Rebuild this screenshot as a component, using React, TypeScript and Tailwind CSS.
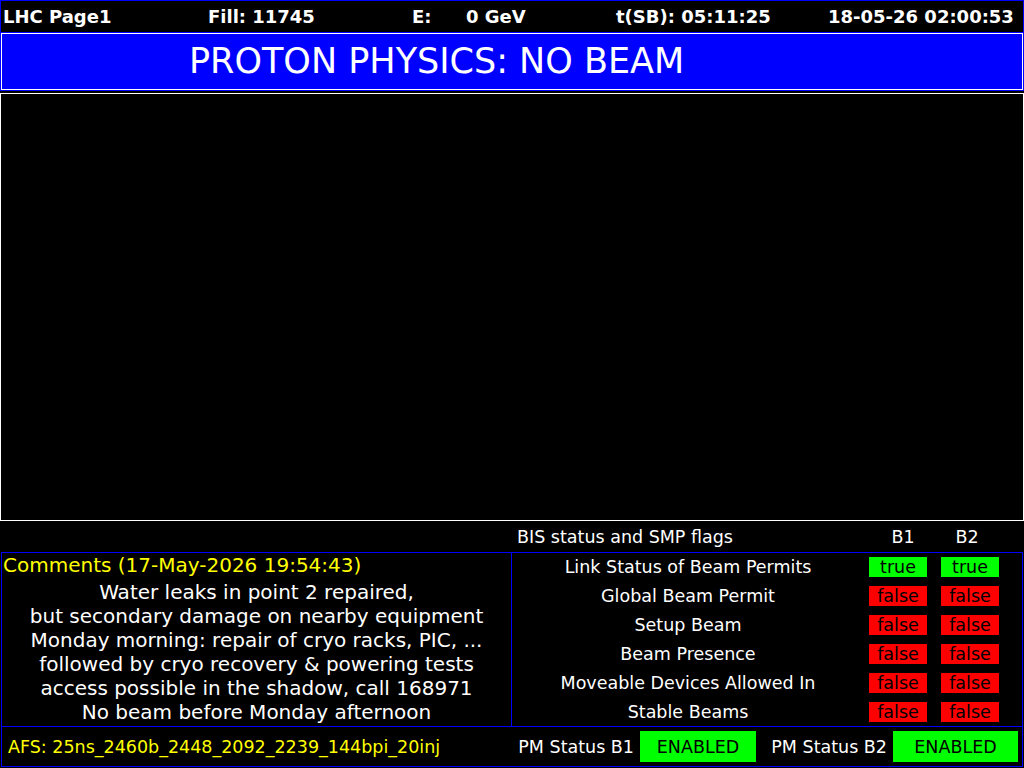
const FONT = { fontFamily: '"DejaVu Sans", "Liberation Sans", sans-serif' }

const flags = [
  { label: 'Link Status of Beam Permits', b1: true, b2: true },
  { label: 'Global Beam Permit', b1: false, b2: false },
  { label: 'Setup Beam', b1: false, b2: false },
  { label: 'Beam Presence', b1: false, b2: false },
  { label: 'Moveable Devices Allowed In', b1: false, b2: false },
  { label: 'Stable Beams', b1: false, b2: false },
]

const comments = [
  'Water leaks in point 2 repaired,',
  'but secondary damage on nearby equipment',
  'Monday morning: repair of cryo racks, PIC, ...',
  'followed by cryo recovery & powering tests',
  'access possible in the shadow, call 168971',
  'No beam before Monday afternoon',
]

function Flag({ on }: { on: boolean }) {
  return (
    <span
      className={
        'w-[58px] h-[20px] flex items-center justify-center text-black text-[17.5px] leading-[20px] ' +
        (on ? 'bg-[#00ff00]' : 'bg-[#ff0000]')
      }
    >
      {on ? 'true' : 'false'}
    </span>
  )
}

export default function App() {
  return (
    <div className="w-[1024px] h-[768px] bg-black text-white flex flex-col overflow-hidden" style={FONT}>
      {/* top status line */}
      <div className="h-[32px] shrink-0 border-t border-x border-[#0000ff] flex items-start pl-[2px] text-[18px] leading-[32px] font-bold whitespace-nowrap">
        <span className="w-[205px]">LHC Page1</span>
        <span className="w-[204px]">Fill: 11745</span>
        <span className="w-[54px]">E:</span>
        <span className="w-[150px]">0 GeV</span>
        <span className="w-[212px]">t(SB): 05:11:25</span>
        <span>18-05-26 02:00:53</span>
      </div>

      {/* machine mode banner */}
      <div className="h-[59px] shrink-0 bg-[#0000ff] p-[1px]">
        <div className="h-full border border-white flex items-center pl-[187px] text-[35px] leading-[55px] whitespace-nowrap">
          PROTON PHYSICS: NO BEAM
        </div>
      </div>

      {/* plot area (empty) */}
      <div className="h-[428px] shrink-0 mt-[2px] border border-white" />

      {/* BIS header */}
      <div className="h-[31px] shrink-0 flex items-center pl-[517px] text-[17.5px] leading-[20px] whitespace-nowrap">
        <span className="w-[357px]">BIS status and SMP flags</span>
        <span className="w-[58px] text-center">B1</span>
        <span className="w-[6px]" />
        <span className="w-[58px] text-center">B2</span>
      </div>

      {/* lower panels */}
      <div className="ml-[1px] w-[1022px] h-[215px] shrink-0 border border-[#0000ff] flex flex-col">
        <div className="h-[173px] flex">
          <div className="w-[510px] border-r border-[#0000ff] flex flex-col">
            <div className="text-[#ffff00] text-[20px] leading-[24px] pl-[1px] whitespace-nowrap">
              Comments (17-May-2026 19:54:43)
            </div>
            <div className="mt-[2.5px] flex flex-col items-center text-[20px] leading-[24px] whitespace-nowrap">
              {comments.map((c) => (
                <div key={c}>{c}</div>
              ))}
            </div>
          </div>
          <div className="flex-1 flex flex-col text-[17.5px] leading-[20px]">
            {flags.map((f) => (
              <div key={f.label} className="flex-1 flex items-center">
                <span className="w-[352px] text-center whitespace-nowrap">{f.label}</span>
                <span className="ml-[5px]">
                  <Flag on={f.b1} />
                </span>
                <span className="ml-[14px]">
                  <Flag on={f.b2} />
                </span>
              </div>
            ))}
          </div>
        </div>

        <div className="flex-1 border-t border-[#0000ff] flex items-center text-[17.5px] leading-[20px] whitespace-nowrap">
          <span className="w-[510px] pl-[6px] text-[#ffff00]">AFS: 25ns_2460b_2448_2092_2239_144bpi_20inj</span>
          <span className="w-[128px] text-right pr-[6px]">PM Status B1</span>
          <span className="w-[116px] h-[31px] bg-[#00ff00] text-black flex items-center justify-center">ENABLED</span>
          <span className="w-[137px] text-right pr-[6px]">PM Status B2</span>
          <span className="w-[125px] h-[31px] bg-[#00ff00] text-black flex items-center justify-center">ENABLED</span>
        </div>
      </div>
    </div>
  )
}
